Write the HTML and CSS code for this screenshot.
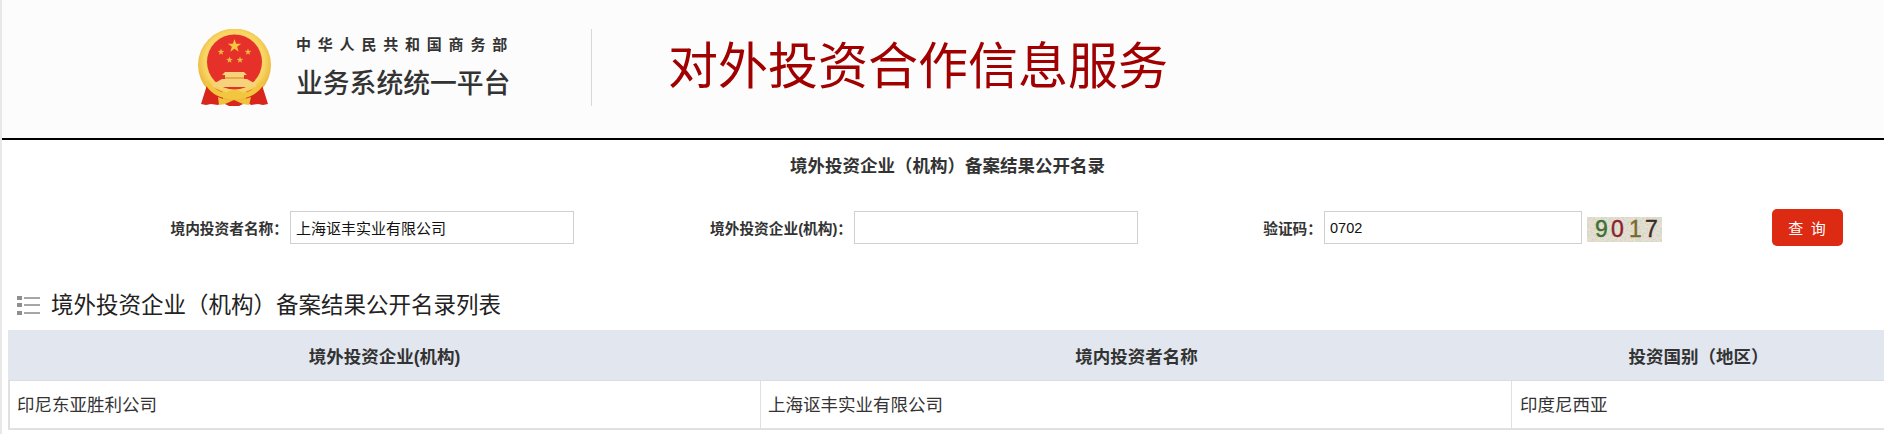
FILE: index.html
```html
<!DOCTYPE html>
<html lang="zh-CN">
<head>
<meta charset="utf-8">
<title>对外投资合作信息服务</title>
<link rel="stylesheet" href="styles.css">
</head>
<body>
<header class="site-header">
  <svg class="emblem" viewBox="0 0 73 77" aria-hidden="true">
    <defs>
      <path id="star" d="M0-1 .235-.324 .951-.309 .38.124 .588.809 0 .4-.588.809-.38.124-.951-.309-.235-.324Z"/>
      <radialGradient id="gold" cx="50%" cy="45%" r="55%">
        <stop offset="0.75" stop-color="#f8d564"/>
        <stop offset="1" stop-color="#e8b133"/>
      </radialGradient>
    </defs>
    <circle cx="36.500" cy="36" r="36.500" fill="url(#gold)"/>
    <circle cx="36.500" cy="33" r="27.500" fill="#e6302a"/>
    <use href="#star" transform="translate(36.500 17) scale(7)" fill="#f5c441"/>
    <use href="#star" transform="translate(23 23) scale(3.500)" fill="#e9b93f"/>
    <use href="#star" transform="translate(50 23) scale(3.500)" fill="#e9b93f"/>
    <use href="#star" transform="translate(31.500 31) scale(3.500)" fill="#e9b93f"/>
    <use href="#star" transform="translate(42 31) scale(3.500)" fill="#e9b93f"/>
    <path d="M27 43h19l3 3h-3v4h3l9 5v3H15v-3l9-5h3v-4h-3z" fill="#f6d27a"/>
    <path d="M27 48h19v2H27z" fill="#e9a94a"/>
    <path d="M9 56l16 7v9l-5 4-7-1-5 1-5-1z" fill="#d9261c"/>
    <path d="M64 56l-16 7v9l5 4 7-1 5 1 5-1z" fill="#d9261c"/>
    <path d="M10 52c6 8 12 11 18 12 3-4 14-4 17 0 6-1 12-4 18-12l3 3c-5 8-12 13-20 14-3 2-16 2-19 0-8-1-15-6-20-14z" fill="#f3c63f"/>
    <path d="M20 68l8 3 8 1 8-1 9-3-2 8-7-1-8-1-8 1-7 1z" fill="#f1c23d"/>
    <path d="M27 75l9-4 9 4-4 2H31z" fill="#d9261c"/>
  </svg>
  <div class="org">
    <div class="org-top">中华人民共和国商务部</div>
    <div class="org-bottom">业务系统统一平台</div>
  </div>
  <div class="divider"></div>
  <h1 class="site-title">对外投资合作信息服务</h1>
</header>

<main class="page">
  <h2 class="page-title">境外投资企业（机构）备案结果公开名录</h2>

  <form class="search">
    <label class="field-label">境内投资者名称：</label>
    <input class="field-input field-input-cjk" type="text" value="上海讴丰实业有限公司">
    <label class="field-label">境外投资企业(机构)：</label>
    <input class="field-input" type="text">
    <label class="field-label">验证码：</label>
    <input class="field-input" type="text" value="0702">
    <svg class="captcha" viewBox="0 0 75 25" role="img" aria-label="9017">
      <defs>
        <filter id="noise" x="0" y="0" width="100%" height="100%">
          <feTurbulence type="fractalNoise" baseFrequency="0.45" numOctaves="3" seed="7"/>
          <feColorMatrix values="0 0 0 0 0.60  0 0 0 0 0.72  0 0 0 0 0.55  5 0 0 0 -2.200"/>
        </filter>
      </defs>
      <rect width="75" height="25" fill="#ecdcd3"/>
      <rect width="75" height="25" filter="url(#noise)"/>
      <g class="captcha-text">
        <text x="8" y="20" fill="#3f7035" stroke="#3f7035">9</text>
        <text x="24" y="20" fill="#8c1f2c" stroke="#8c1f2c">0</text>
        <text x="42" y="20" fill="#7a6a2c" stroke="#7a6a2c">1</text>
        <text x="58" y="20" fill="#3d2a28" stroke="#3d2a28">7</text>
      </g>
    </svg>
    <button class="search-btn" type="button">查 询</button>
  </form>

  <h3 class="list-title">
    <svg class="list-icon" viewBox="0 0 24 19" aria-hidden="true">
      <rect x="1" y="0" width="5" height="4" fill="#8f8f8f"/>
      <rect x="1" y="7" width="5" height="4" fill="#8f8f8f"/>
      <rect x="1" y="15" width="5" height="4" fill="#8f8f8f"/>
      <rect x="8" y="1" width="16" height="2" fill="#a6a6a6"/>
      <rect x="8" y="8" width="16" height="2" fill="#a6a6a6"/>
      <rect x="8" y="16" width="16" height="2" fill="#a6a6a6"/>
    </svg>
    <span>境外投资企业（机构）备案结果公开名录列表</span>
  </h3>

  <div class="table">
    <div class="th">境外投资企业(机构)</div>
    <div class="th">境内投资者名称</div>
    <div class="th">投资国别（地区）</div>
    <div class="td">印尼东亚胜利公司</div>
    <div class="td">上海讴丰实业有限公司</div>
    <div class="td td-last">印度尼西亚</div>
  </div>
</main>
</body>
</html>
```
FILE: styles.css
```css
* { box-sizing: border-box; }
html, body { margin: 0; padding: 0; }
body {
  width: 1884px;
  height: 434px;
  overflow: hidden;
  background: #fff;
  border-left: 2px solid #e8e8e8;
  color: #333;
  font-family: "Liberation Sans", "Noto Sans CJK SC", sans-serif;
}
.site-header {
  display: flex;
  align-items: center;
  height: 140px;
  padding: 0 0 4px 196px;
  background: #fcfcfc;
  border-bottom: 2px solid #000;
}
.emblem { width: 73px; height: 77px; flex: none; }
.org { margin-left: 25px; width: 295px; color: #333; }
.org-top {
  font-size: 15px;
  font-weight: 700;
  letter-spacing: 6.800px;
  line-height: 20px;
  white-space: nowrap;
}
.org-bottom {
  margin-top: 14px;
  font-size: 26.800px;
  font-weight: 500;
  line-height: 30px;
  white-space: nowrap;
}
.divider { width: 1px; height: 77px; background: #d8d8d8; flex: none; }
.site-title {
  margin: 0 0 0 76px;
  font-size: 50px;
  font-weight: 400;
  line-height: 60px;
  color: #a00000;
  white-space: nowrap;
}
.page-title {
  margin: 0;
  padding: 14px 0 0 9px;
  height: 69px;
  text-align: center;
  font-size: 17.500px;
  line-height: 24px;
  font-weight: 700;
}
.search {
  display: grid;
  grid-template-columns: 288px 284px 280px 284px 186px 258px 75px 71px;
  align-items: center;
  height: 37px;
}
.field-label {
  padding-right: 2px;
  text-align: right;
  font-size: 14.700px;
  font-weight: 700;
  white-space: nowrap;
}
.field-input {
  width: 100%;
  height: 33px;
  padding: 0 5px;
  border: 1px solid #d0d0d0;
  background: #fff;
  color: #111;
  font: 14.500px "Liberation Sans", "Noto Sans CJK SC", sans-serif;
  outline: none;
}
.field-input-cjk { font-size: 15px; }
.captcha {
  display: block;
  width: 75px;
  height: 25px;
  margin: 4px 0 0 5px;
}
.captcha-text text {
  font-family: "Liberation Sans", sans-serif;
  font-size: 23px;
  stroke-width: 0.4px;
}
.search-btn {
  width: 71px;
  height: 37px;
  margin-left: 115px;
  padding: 0;
  border: 0;
  border-radius: 5px;
  background: #dc2a13;
  color: #fff;
  font: 15px "Noto Sans CJK SC", sans-serif;
  letter-spacing: 1px;
  word-spacing: 2px;
}
.list-title {
  display: flex;
  align-items: center;
  gap: 11px;
  margin: 0;
  padding: 36px 0 0 14px;
  height: 84px;
  font-size: 22.500px;
  line-height: 30px;
  font-weight: 400;
  color: #222;
}
.list-icon { width: 24px; height: 19px; flex: none; margin-bottom: 2px; }
.table {
  display: grid;
  grid-template-columns: 753px 751px 1fr;
  grid-template-rows: 51px 49px;
  margin-left: 6px;
}
.th {
  display: flex;
  align-items: center;
  justify-content: center;
  background: #e2e7ef;
  border-bottom: 1px solid #d9dce1;
  font-size: 17.500px;
  font-weight: 700;
}
.th:nth-child(3) { padding-left: 1px; }
.td {
  display: flex;
  align-items: center;
  padding: 0 0 3px 7px;
  border-right: 1px solid #e0e0e0;
  border-bottom: 2px solid #e0e0e0;
  font-size: 17.500px;
  color: #333;
}
.td:nth-child(4) { border-left: 2px solid #e0e0e0; }
.td-last { border-right: 0; padding-left: 8px; }
```
